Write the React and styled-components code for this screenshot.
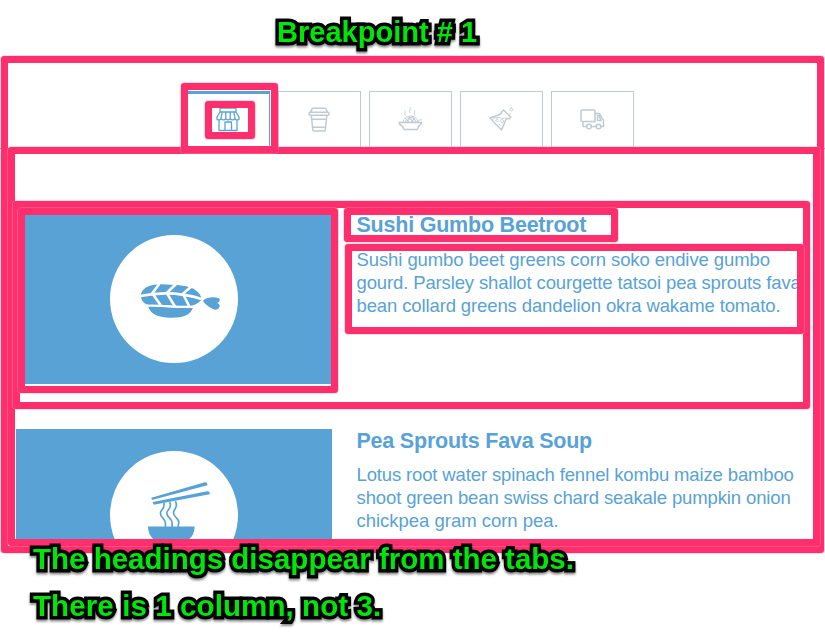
import React from "react";
import styled, { createGlobalStyle, css } from "styled-components";

const BLUE = "#58a2d6";
const GREY = "#c0cad2";
const PINK = "#ff2e6c";

const Global = createGlobalStyle`
  * { box-sizing: border-box; }
  body { margin: 0; background: #fff; font-family: "Liberation Sans", Arial, sans-serif; }
`;

const Board = styled.div`
  position: relative;
  width: 825px;
  height: 632px;
  overflow: hidden;
  background: #fff;
`;

const Page = styled.div`
  height: 547px;
  overflow: hidden;
`;

const TitleBar = styled.header`
  height: 91px;
  padding: 15px 0 0 277px;
`;

const Label = styled.div`
  width: max-content;
  font-size: ${(p) => p.$size}px;
  line-height: 34px;
  font-weight: 700;
  letter-spacing: ${(p) => p.$spacing}px;
  color: #00e60a;
  white-space: nowrap;
  -webkit-text-stroke: 7px #000;
  paint-order: stroke fill;
  stroke-linejoin: round;
  filter: drop-shadow(0 2px 1px rgba(0, 0, 0, 0.45));
`;

const TabBar = styled.nav`
  display: flex;
  gap: 8px;
  height: 58px;
  padding-left: 187px;
  border-bottom: 1px solid ${BLUE};
`;

const Tab = styled.div`
  display: flex;
  justify-content: center;
  width: 83px;
  height: 58px;
  padding-top: 15px;
  border: 1px solid ${GREY};
  border-bottom: 0;
  color: ${GREY};
  ${(p) =>
    p.$active &&
    css`
      padding-top: 13px;
      border-color: ${BLUE};
      border-top-width: 3px;
      color: ${BLUE};
    `}
`;

const TabIcon = styled.svg`
  width: 26px;
  height: 26px;
  margin-left: -1px;
  fill: none;
  stroke: currentColor;
  stroke-width: 1.5;
  stroke-linecap: round;
  stroke-linejoin: round;
`;

const List = styled.main`
  display: flex;
  flex-direction: column;
  gap: 45px;
  padding: 64px 8px 0 16px;
`;

const Item = styled.article`
  display: grid;
  grid-template-columns: 316px 1fr;
  column-gap: 24.5px;
  height: 171px;
`;

const Thumb = styled.div`
  display: flex;
  justify-content: center;
  height: 171px;
  padding-top: 22px;
  background: ${BLUE};
`;

const Plate = styled.svg`
  width: 128px;
  height: 128px;
  border-radius: 50%;
  background: #fff;
`;

const Heading = styled.h2`
  margin: 0 0 ${(p) => p.$gap}px;
  font-size: 21.5px;
  line-height: 24px;
  letter-spacing: -0.22px;
  color: ${BLUE};
`;

const Copy = styled.p`
  margin: 0;
  font-size: 18.5px;
  line-height: 23px;
  color: ${BLUE};
  white-space: nowrap;
`;

const Line = styled.span`
  display: block;
  letter-spacing: ${(p) => p.$spacing}px;
`;

const Frame = styled.div`
  position: absolute;
  left: ${(p) => p.$x}px;
  top: ${(p) => p.$y}px;
  width: ${(p) => p.$w}px;
  height: ${(p) => p.$h}px;
  border: 7px solid ${PINK};
  border-radius: 3px;
  box-shadow: 0 0 0 0.6px rgba(255, 150, 182, 0.65);
`;

const Notes = styled.footer`
  position: absolute;
  left: 33px;
  top: 542px;
  display: flex;
  flex-direction: column;
  gap: 13px;
`;

const ShopIcon = () => (
  <TabIcon viewBox="0 0 26 26">
    <path
      strokeWidth="1.3"
      d="M5 1h16v4H5zM5 5 2 10v2.200c1 1 3 1 4.200-.4 1.200 1.400 3.400 1.400 4.500 0 1.200 1.400 3.400 1.400 4.600 0 1.100 1.400 3.300 1.400 4.500 0 1.200 1.400 3.200 1.400 4.200.4V10l-3-5M7 6l-1 5.500M10.800 6v5.500M15.200 6v5.500M19 6l1 5.500M4 13v10.500h18V13M10 23v-8h6.500v8"
    />
  </TabIcon>
);

const CupIcon = () => (
  <TabIcon viewBox="0 0 26 26">
    <path d="M6.500 1.200h13l2 4h-17zM4 5.200h18q1 0 1 1.500t-1 1.500H4q-1 0-1-1.500t1-1.500ZM5.300 8.500 6.800 23q.1 1 1 1h10.400q1 0 1.100-1l1.500-14.500M6 12.300h14M7 20.200h12" />
  </TabIcon>
);

const BowlIcon = () => (
  <TabIcon viewBox="0 0 26 26">
    <path d="M2 15.500h22.500c0 2-1.500 2.500-2.500 3.300L20 22.500H7l-2-3.700c-1.500-.8-3-1.300-3-3.300Z" />
    <path
      strokeWidth=".9"
      d="M6 15c1-8 14-8 15 0M8 15c2-6 9-6 11 0M10.500 15c1-4 5-4 6 0M8 11l4 4M11 9.500l5 5.500M15 9l4 5M18 11l-4 4M14.500 9.500 9 14.500M20 14.500l4.500-2.200M8 8c-1-2 1-2.500 0-4.500M13 5.500c-1-2 1-3 0-5M17.500 8c-1-2 1-2.500 0-4.500"
    />
  </TabIcon>
);

const FlaskIcon = () => (
  <TabIcon viewBox="0 0 26 26">
    <path d="M2 11 10 8.300Q13.500 7 14 4.500L15.500 3l7.300 7-1.500 1.700Q18.500 11 17.500 13.500L13.500 23Z" />
    <path
      strokeWidth=".9"
      d="M5 12c5-4 8 1 13-1M9 12a1.200 1.200 0 1 0 .1 0M14 12.500a1.600 1.600 0 1 0 .1 0M11.500 17.500v.5M23.300 1a1.500 1.500 0 1 0 .1 0M22 6.300v.4"
    />
  </TabIcon>
);

const TruckIcon = () => (
  <TabIcon viewBox="0 0 26 26">
    <path d="M3 3h12q1 0 1 1v10.500H3q-1 0-1-1V4q0-1 1-1ZM16.500 6.500h4l3 5.500 1 1v6.500h-2.500M18.500 8.500h1.500l2 5h-3.500zM4 14.500v5h3.500M12.500 19.500h5" />
    <circle cx="10" cy="19.500" r="2.300" />
    <circle cx="19.500" cy="19.500" r="2.300" />
  </TabIcon>
);

const Sushi = () => (
  <Plate viewBox="330 135 384 384" fill={BLUE}>
    <path d="M423 311C429 291 457 282 485 283L512 284 533 285 558 289C580 293 597 306 603 320V331C596 339 586 345 573 348C545 352 482 344 453 346C433 344 424 332 423 320Z" />
    <path d="M444 349C490 350 534 357 579 353C571 375 549 383 516 383C482 384 453 377 444 349Z" />
    <path d="M610 331C620 321 642 319 657 325C662 331 659 336 652 339C663 344 661 356 648 359C634 358 618 344 610 335Z" />
    <g fill="none" stroke="#fff" strokeWidth="8">
      <path d="M420 318C471 308 540 306 607 328" />
      <path d="M456 311 478 281M499 310 529 281M548 312 577 287M459 313 482 346M501 310 525 350M549 312 569 351" />
      <path strokeWidth="6" d="M440 347C490 345 534 353 583 350" />
    </g>
  </Plate>
);

const Noodles = () => (
  <Plate viewBox="330 92 381 381" fill={BLUE}>
    <path d="M453 231 612 185Q620 184 620 194L455 238Z" />
    <path d="M457 244 619 212Q628 211 627 221L460 252Z" />
    <g fill="none" stroke={BLUE} strokeWidth="5">
      <path d="M490 247C495 265 480 264 480 278C480 292 496 292 495 308V322" />
      <path d="M507 244C518 260 499 266 499 277C499 290 515 291 515 307V322" />
      <path d="M524 242C536 256 519 265 519 276C519 290 536 291 535 306C532 312 533 316 534 322" />
    </g>
    <path d="M443 317H582C581 352 556 373 512 373C470 373 444 352 443 317Z" />
  </Plate>
);

const tabs = [ShopIcon, CupIcon, BowlIcon, FlaskIcon, TruckIcon];

const items = [
  {
    Art: Sushi,
    title: "Sushi Gumbo Beetroot",
    gap: 11,
    lines: [
      ["Sushi gumbo beet greens corn soko endive gumbo", -0.09],
      ["gourd. Parsley shallot courgette tatsoi pea sprouts fava", -0.13],
      ["bean collard greens dandelion okra wakame tomato.", -0.12],
    ],
  },
  {
    Art: Noodles,
    title: "Pea Sprouts Fava Soup",
    gap: 10,
    lines: [
      ["Lotus root water spinach fennel kombu maize bamboo", -0.14],
      ["shoot green bean swiss chard seakale pumpkin onion", -0.12],
      ["chickpea gram corn pea.", -0.02],
    ],
  },
];

const frames = [
  [1, 56, 823, 497],
  [8, 147, 812, 399],
  [13, 201, 797, 208],
  [18, 208, 320, 185],
  [344, 208, 274, 34],
  [345, 244, 459, 90],
  [181, 83, 97, 70],
  [205, 101, 50, 38],
];

export default function App() {
  return (
    <Board>
      <Global />
      <Page>
        <TitleBar>
          <Label $size={29} $spacing={0.02}>Breakpoint # 1</Label>
        </TitleBar>
        <TabBar>
          {tabs.map((Icon, i) => (
            <Tab key={i} $active={i === 0}>
              <Icon />
            </Tab>
          ))}
        </TabBar>
        <List>
          {items.map(({ Art, title, gap, lines }) => (
            <Item key={title}>
              <Thumb>
                <Art />
              </Thumb>
              <div>
                <Heading $gap={gap}>{title}</Heading>
                <Copy>
                  {lines.map(([line, spacing]) => (
                    <Line key={line} $spacing={spacing}>
                      {line}
                    </Line>
                  ))}
                </Copy>
              </div>
            </Item>
          ))}
        </List>
      </Page>
      {frames.map(([x, y, w, h]) => (
        <Frame key={`${x}-${y}`} $x={x} $y={y} $w={w} $h={h} />
      ))}
      <Notes>
        <Label $size={29.5} $spacing={0}>The headings disappear from the tabs.</Label>
        <Label $size={29.5} $spacing={0.1}>There is 1 column, not 3.</Label>
      </Notes>
    </Board>
  );
}
